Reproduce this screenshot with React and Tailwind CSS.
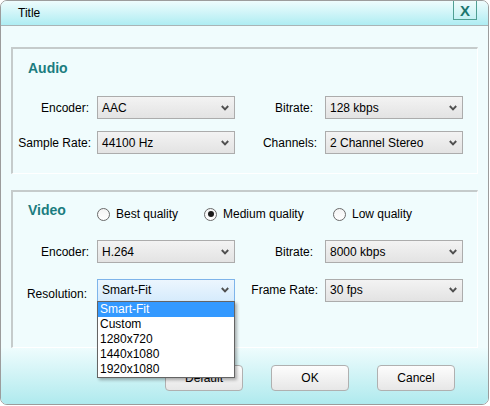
import React from "react";

const F = { fontFamily: '"Liberation Sans", Arial, sans-serif' };

function Chevron() {
  return (
    <svg width="8" height="6" viewBox="0 0 8 6" className="shrink-0">
      <path d="M0.8 1 L4 4.4 L7.2 1" fill="none" stroke="#505050" strokeWidth="1.9" />
    </svg>
  );
}

function Select({ value, active = false, children }) {
  return (
    <div className="relative w-[138px] h-[23px] shrink-0">
      <div
        className={
          active
            ? "w-full h-full flex items-center justify-between pl-[4px] pr-[5px] border border-[#7eb4ea] bg-gradient-to-b from-[#ecf6fe] to-[#d6ebfc] text-[12px] text-black"
            : "w-full h-full flex items-center justify-between pl-[4px] pr-[5px] border border-[#acacac] bg-gradient-to-b from-[#f3f3f3] to-[#e3e3e3] text-[12px] text-black"
        }
      >
        <span>{value}</span>
        <Chevron />
      </div>
      {children}
    </div>
  );
}

function Radio({ checked, label }) {
  return (
    <div className="flex items-center gap-[6px]">
      <div className="w-[13px] h-[13px] rounded-full border border-[#6a6a6a] bg-gradient-to-b from-[#f4f4f4] to-[#ffffff] flex items-center justify-center">
        {checked && <div className="w-[6px] h-[6px] rounded-full bg-[#1b1b1b]" />}
      </div>
      <span className="text-[12px] text-black leading-[14px]">{label}</span>
    </div>
  );
}

function Btn({ children }) {
  return (
    <div className="w-[78px] h-[26px] rounded-[4px] border border-[#b0b0b0] bg-gradient-to-b from-[#fdfdfd] to-[#e7e7e7] flex items-center justify-center text-[12px] text-black">
      {children}
    </div>
  );
}

export default function App() {
  return (
    <div className="w-[490px] h-[406px] bg-white" style={F}>
      <div className="w-[489px] h-[405px] border border-[#9c9c9c] rounded-[7px] overflow-hidden flex flex-col bg-[#f0fcfd]">
        {/* Title bar */}
        <div className="h-[25px] shrink-0 border-b border-[#a9b4b6] bg-gradient-to-b from-[#eefcfd] to-[#aeedf3] flex items-start">
          <span className="pl-[17px] pt-[5px] text-[12px] leading-[14px] text-black">Title</span>
          <div className="ml-auto mr-[11px] mt-[-1px] w-[24px] h-[20px] border border-[#4f9f93] bg-gradient-to-b from-[#effcfc] to-[#c4f1f4] flex items-center justify-center text-[15px] font-bold leading-none text-[#1b766e]">
            X
          </div>
        </div>

        {/* Body */}
        <div className="flex-1 flex flex-col px-[10px] pt-[21px]">
          {/* Audio */}
          <div className="h-[127px] border-t-2 border-l-2 border-t-[#c5cbcb] border-l-[#c5cbcb] border-r border-b border-r-white border-b-white pt-[11px]">
            <div className="pl-[15px] text-[14px] leading-[16px] font-bold text-[#1b7c80]">Audio</div>
            <div className="mt-[20px] flex items-center">
              <div className="w-[84px] pr-[8px] text-right text-[12px] text-black">Encoder:</div>
              <Select value="AAC" />
              <div className="w-[90px] pr-[12px] text-right text-[12px] text-black">Bitrate:</div>
              <Select value="128 kbps" />
            </div>
            <div className="mt-[12px] flex items-center">
              <div className="w-[84px] pr-[6px] text-right text-[12px] text-black">Sample Rate:</div>
              <Select value="44100 Hz" />
              <div className="w-[90px] pr-[8px] text-right text-[12px] text-black">Channels:</div>
              <Select value="2 Channel Stereo" />
            </div>
          </div>

          {/* Video */}
          <div className="mt-[16px] h-[158px] border-t-2 border-l-2 border-t-[#c5cbcb] border-l-[#c5cbcb] border-r border-b border-r-white border-b-white pt-[10px]">
            <div className="flex items-start h-[20px]">
              <div className="w-[84px] pl-[15px] text-[14px] leading-[16px] font-bold text-[#1b7c80]">Video</div>
              <div className="mt-[5px] flex items-center">
                <div className="w-[107px]">
                  <Radio label="Best quality" />
                </div>
                <div className="w-[129px]">
                  <Radio checked label="Medium quality" />
                </div>
                <Radio label="Low quality" />
              </div>
            </div>
            <div className="mt-[18px] flex items-center">
              <div className="w-[84px] pr-[8px] text-right text-[12px] text-black">Encoder:</div>
              <Select value="H.264" />
              <div className="w-[90px] pr-[12px] text-right text-[12px] text-black">Bitrate:</div>
              <Select value="8000 kbps" />
            </div>
            <div className="mt-[14px] flex items-center relative z-10">
              <div className="w-[84px] pr-[10px] pt-[8px] text-right text-[12px] text-black">Resolution:</div>
              <Select value="Smart-Fit" active>
                <div className="absolute left-0 top-[22px] w-[138px] border border-[#646464] bg-white shadow-[2px_2px_3px_rgba(0,0,0,0.3)] text-[12px] leading-[15px] text-black">
                  <div className="h-[15px] pl-[2px] bg-[#3399ff] text-white">Smart-Fit</div>
                  <div className="h-[15px] pl-[2px]">Custom</div>
                  <div className="h-[15px] pl-[2px]">1280x720</div>
                  <div className="h-[15px] pl-[2px]">1440x1080</div>
                  <div className="h-[15px] pl-[2px]">1920x1080</div>
                </div>
              </Select>
              <div className="w-[90px] pr-[7px] text-right text-[12px] text-black">Frame Rate:</div>
              <Select value="30 fps" />
            </div>
          </div>
        </div>

        {/* Footer */}
        <div className="h-[56px] shrink-0 bg-gradient-to-b from-[#eefcfd] to-[#afeaee] flex justify-end items-start pt-[17px] pr-[33px] gap-[28px]">
          <Btn>Default</Btn>
          <Btn>OK</Btn>
          <Btn>Cancel</Btn>
        </div>
      </div>
    </div>
  );
}
